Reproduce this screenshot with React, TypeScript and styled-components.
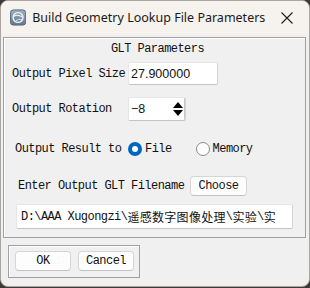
import React from "react";
import styled, { createGlobalStyle } from "styled-components";

const GlobalStyle = createGlobalStyle`
  html, body {
    margin: 0;
    padding: 0;
    background: #3d3935;
  }
  body {
    width: 310px;
    height: 288px;
    overflow: hidden;
  }
`;

const mono = `"Liberation Mono", "Noto Sans CJK SC", monospace`;

const Window = styled.div`
  width: 310px;
  height: 287px;
  box-sizing: border-box;
  border: 1px solid #a9a6a2;
  border-radius: 8px;
  overflow: hidden;
  background: #f0f0f0;
  display: flex;
  flex-direction: column;
`;

const TitleBar = styled.div`
  height: 33px;
  flex-shrink: 0;
  background: #f6f2ed;
  display: flex;
  align-items: center;
  padding: 0 0 0 9px;
  font-family: "Noto Sans", "Open Sans", sans-serif;
  font-size: 12.5px;
  color: #1a1a1a;
`;

const TitleText = styled.span`
  margin-left: 6px;
  flex: 1;
  white-space: nowrap;
`;

const CloseBox = styled.div`
  width: 46px;
  height: 33px;
  display: flex;
  align-items: center;
  justify-content: center;
`;

const Client = styled.div`
  flex: 1;
  display: flex;
  flex-direction: column;
  align-items: flex-start;
  padding: 3px 4px 0 2px;
`;

const Frame = styled.div`
  width: 303px;
  box-sizing: border-box;
  border: 1px solid #a0a0a0;
  box-shadow: inset 1px 1px 0 #ffffff;
  display: flex;
  flex-direction: column;
  padding-bottom: 8px;
  font-family: ${mono};
  font-size: 12px;
  letter-spacing: -0.55px;
  color: #111;
`;

const Heading = styled.div`
  margin-top: 5px;
  line-height: 13px;
  text-align: center;
  padding-left: 6px;
`;

const Row = styled.div<{ $top: number; $indent: number }>`
  display: flex;
  align-items: center;
  margin-top: ${(p) => p.$top}px;
  padding-left: ${(p) => p.$indent}px;
`;

const Label = styled.span<{ $w: number }>`
  width: ${(p) => p.$w}px;
  flex-shrink: 0;
  white-space: nowrap;
`;

const TextBox = styled.div<{ $w: number; $h: number; $mono?: boolean }>`
  width: ${(p) => p.$w}px;
  height: ${(p) => p.$h}px;
  box-sizing: border-box;
  background: #ffffff;
  border: 1px solid #e6e6e6;
  border-bottom-color: #c4c4c4;
  border-right-color: #d4d4d4;
  border-radius: 2px;
  display: flex;
  align-items: center;
  padding-left: ${(p) => (p.$mono ? 4 : 2)}px;
  overflow: hidden;
  white-space: nowrap;
  font-family: ${(p) => (p.$mono ? mono : `"Liberation Sans", Arial, sans-serif`)};
  font-size: ${(p) => (p.$mono ? 12 : 12.5)}px;
  letter-spacing: ${(p) => (p.$mono ? -0.55 : 0)}px;
  color: #111;
`;

const Cjk = styled.span`
  letter-spacing: 0.3px;
  font-size: 12px;
`;

const SpinText = styled.span`
  flex: 1;
`;

const SpinArrows = styled.div`
  width: 13px;
  height: 22px;
  display: flex;
  align-items: center;
  justify-content: center;
  border-right: 1px solid #c8c8c8;
`;

const RadioItem = styled.label<{ $gap: number }>`
  display: flex;
  align-items: center;
  margin-right: ${(p) => p.$gap}px;
`;

const RadioCircle = styled.span<{ $on?: boolean }>`
  width: 14px;
  height: 14px;
  box-sizing: border-box;
  border-radius: 50%;
  margin-right: 3px;
  background: ${(p) => (p.$on ? "#0067c0" : "#fdfdfd")};
  border: ${(p) => (p.$on ? "none" : "1px solid #8a8a8a")};
  display: flex;
  align-items: center;
  justify-content: center;

  &::after {
    content: "";
    display: ${(p) => (p.$on ? "block" : "none")};
    width: 6px;
    height: 6px;
    border-radius: 50%;
    background: #ffffff;
  }
`;

const Button = styled.button<{ $w: number }>`
  width: ${(p) => p.$w}px;
  height: 20px;
  box-sizing: border-box;
  background: #fdfdfd;
  border: 1px solid #d6d6d6;
  border-bottom-color: #c2c2c2;
  border-radius: 4px;
  padding: 0;
  font-family: ${mono};
  font-size: 12px;
  letter-spacing: -0.55px;
  color: #111;
`;

const ButtonFrame = styled.div`
  margin-top: 7px;
  margin-left: 5px;
  box-sizing: border-box;
  border: 1px solid #a0a0a0;
  box-shadow: inset 1px 1px 0 #ffffff;
  padding: 5px 5px 6px 6px;
  display: flex;
  gap: 7px;
`;

const AppIcon = () => (
  <svg width="17" height="17" viewBox="0 0 17 17">
    <defs>
      <linearGradient id="ig" x1="0" y1="0" x2="0" y2="1">
        <stop offset="0" stopColor="#9fb1c4" />
        <stop offset="1" stopColor="#62788f" />
      </linearGradient>
    </defs>
    <rect x="0.5" y="0.5" width="16" height="16" rx="3" fill="url(#ig)" stroke="#55687c" />
    <circle cx="8.5" cy="8.5" r="5.2" fill="none" stroke="#f2f5f8" strokeWidth="1.4" />
    <path d="M4 7.2 C6.5 5.8 10 6 13 8" fill="none" stroke="#f2f5f8" strokeWidth="1.1" />
    <path d="M6 12.5 C7.5 10.5 10.5 10 12.8 11" fill="none" stroke="#dfe6ee" strokeWidth="1" />
  </svg>
);

const CloseIcon = () => (
  <svg width="12" height="12" viewBox="0 0 12 12">
    <path d="M0.5 0.5 L11.5 11.5 M11.5 0.5 L0.5 11.5" stroke="#1f1f1f" strokeWidth="1.1" />
  </svg>
);

const Arrows = () => (
  <svg width="10" height="16" viewBox="0 0 10 16">
    <path d="M5 1 L10 7 L0 7 Z" fill="#000" />
    <path d="M0 9 L10 9 L5 15 Z" fill="#000" />
  </svg>
);

export default function App() {
  return (
    <>
      <GlobalStyle />
      <Window>
        <TitleBar>
          <AppIcon />
          <TitleText>Build Geometry Lookup File Parameters</TitleText>
          <CloseBox>
            <CloseIcon />
          </CloseBox>
        </TitleBar>
        <Client>
          <Frame>
            <Heading>GLT Parameters</Heading>
            <Row $top={6} $indent={8}>
              <Label $w={116}>Output Pixel Size</Label>
              <TextBox $w={90} $h={23}>27.900000</TextBox>
            </Row>
            <Row $top={12} $indent={8}>
              <Label $w={116}>Output Rotation</Label>
              <TextBox $w={58} $h={24}>
                <SpinText>−8</SpinText>
                <SpinArrows>
                  <Arrows />
                </SpinArrows>
              </TextBox>
            </Row>
            <Row $top={21} $indent={11}>
              <Label $w={113}>Output Result to</Label>
              <RadioItem $gap={24}>
                <RadioCircle $on />
                File
              </RadioItem>
              <RadioItem $gap={0}>
                <RadioCircle />
                Memory
              </RadioItem>
            </Row>
            <Row $top={20} $indent={14}>
              <Label $w={172}>Enter Output GLT Filename</Label>
              <Button $w={57}>Choose</Button>
            </Row>
            <Row $top={8} $indent={12}>
              <TextBox $w={277} $h={25} $mono>
                D:\AAA Xugongzi\<Cjk>遥感数字图像处理</Cjk>\<Cjk>实验</Cjk>\<Cjk>实</Cjk>
              </TextBox>
            </Row>
          </Frame>
          <ButtonFrame>
            <Button $w={56}>OK</Button>
            <Button $w={56}>Cancel</Button>
          </ButtonFrame>
        </Client>
      </Window>
    </>
  );
}
